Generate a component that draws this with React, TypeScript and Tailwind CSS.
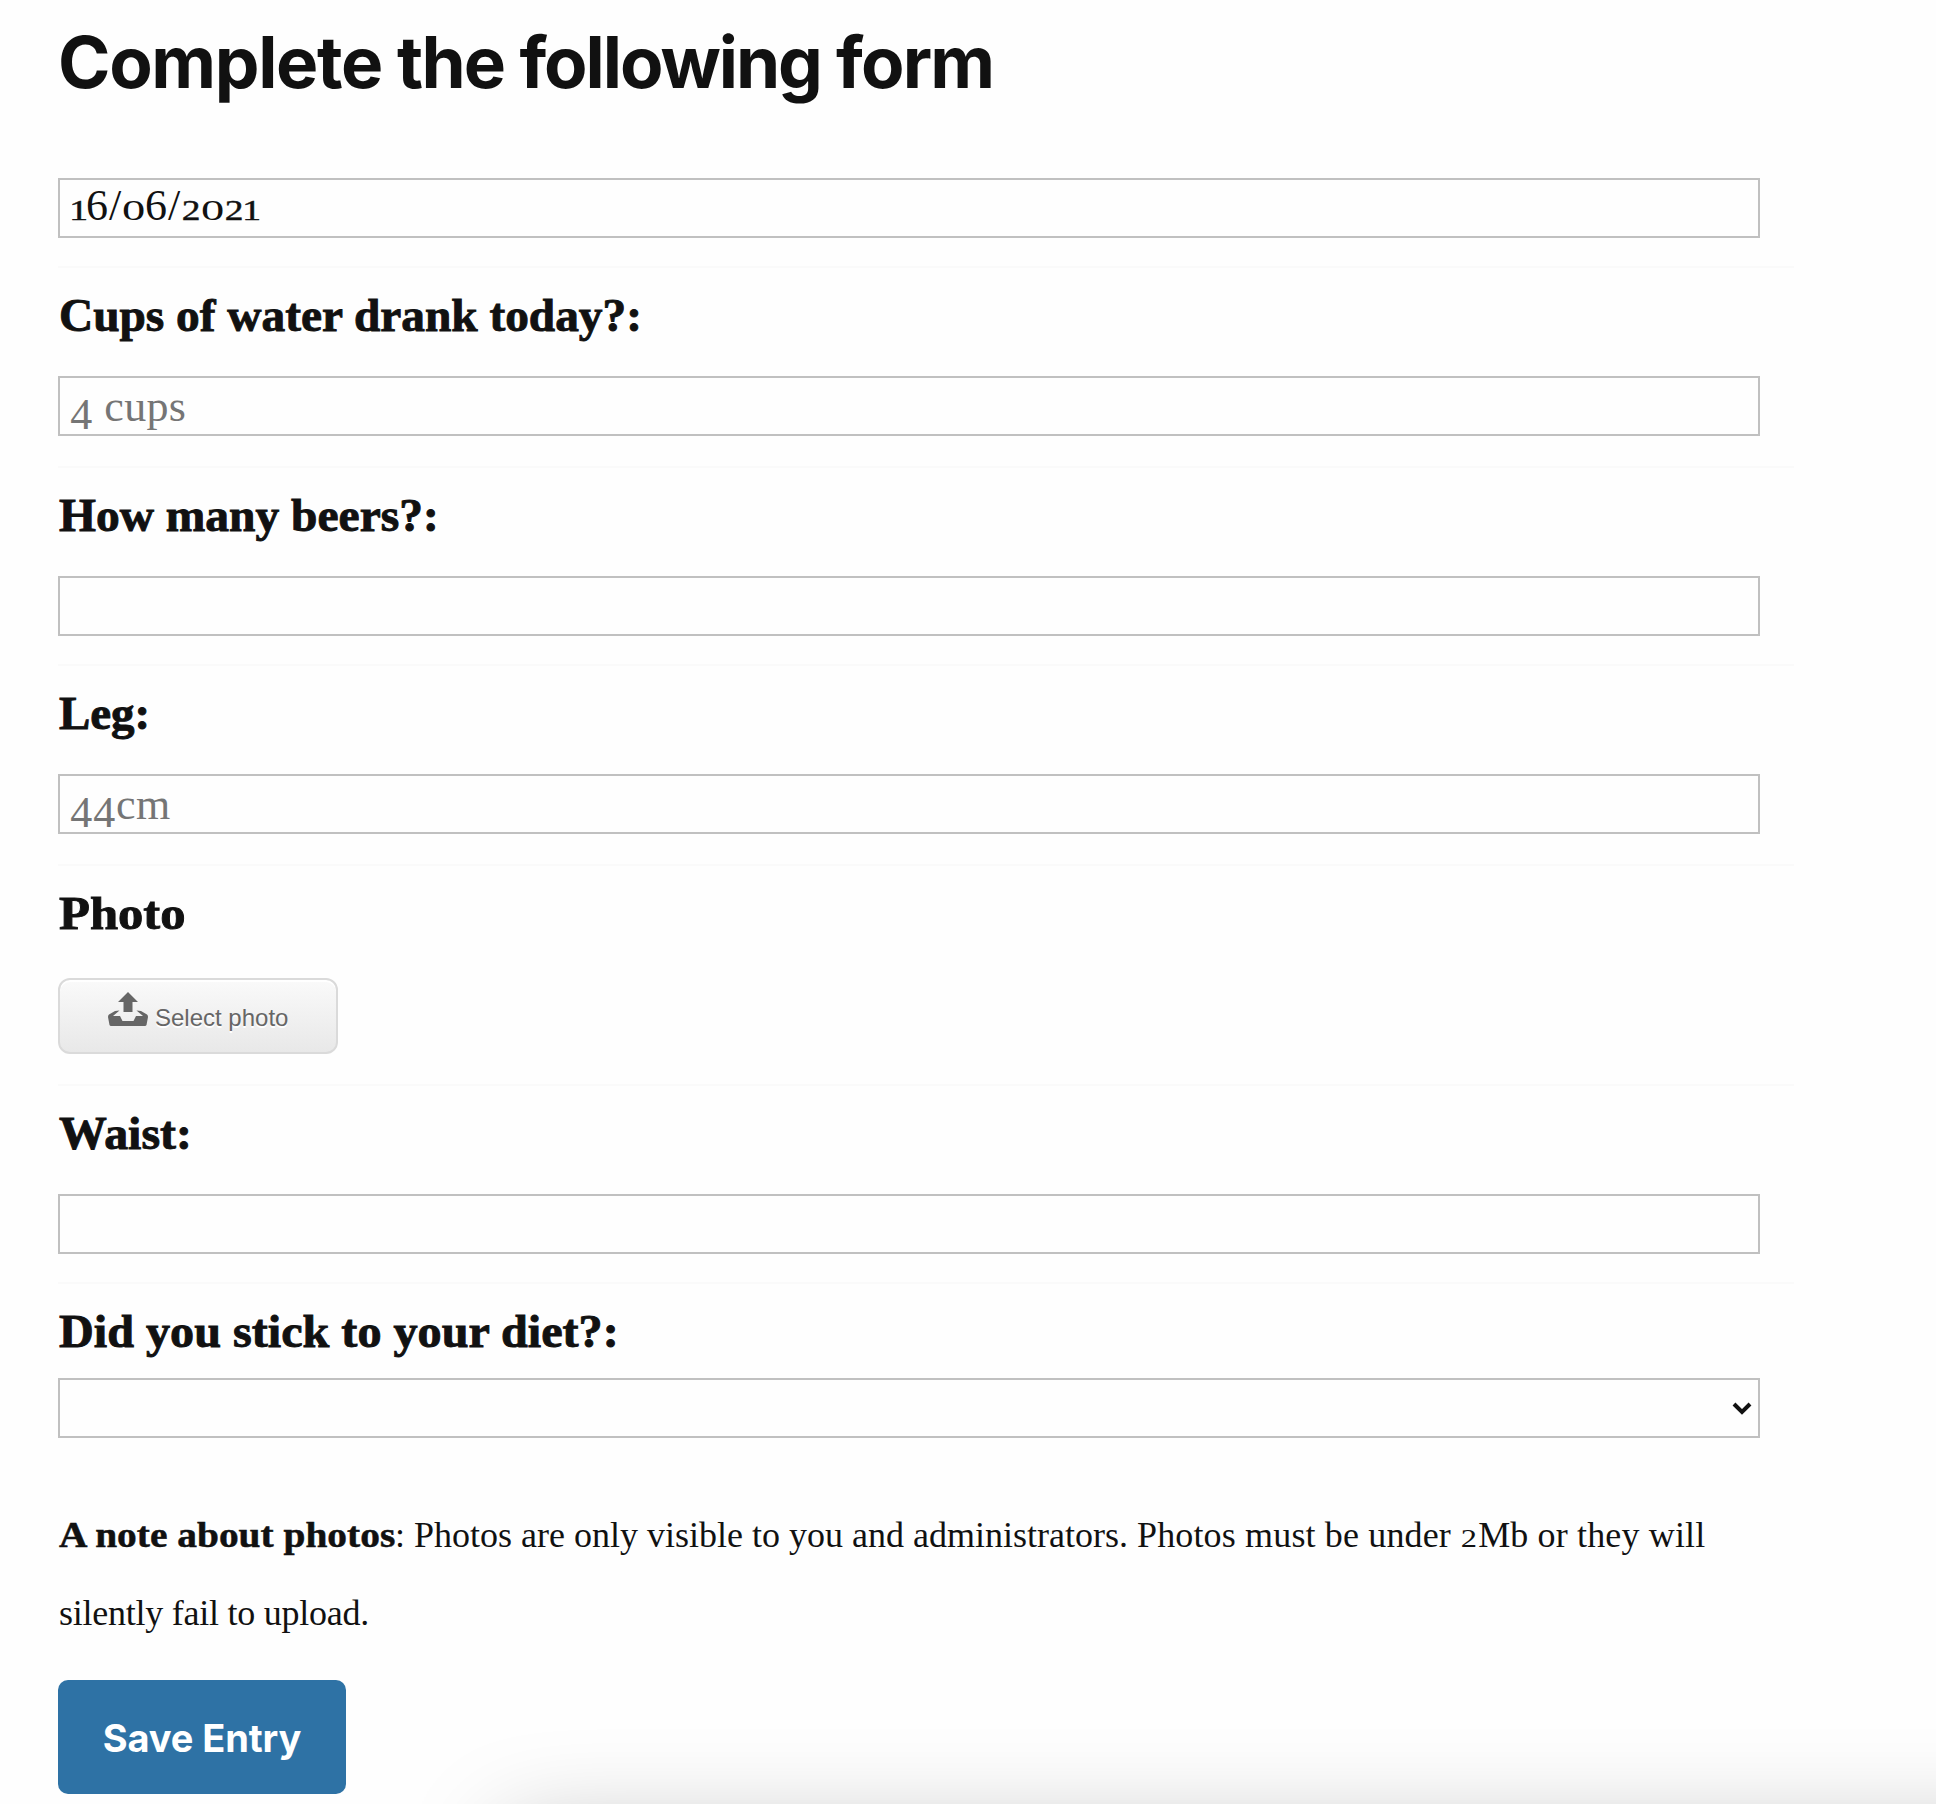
import type { ReactNode } from "react";

const glyphs: Record<string, string> = {
  "1": "w-[15px] text-[30px] scale-x-[1.25] [-webkit-text-stroke:0.5px_currentColor]",
  "2": "w-[20px] text-[30px] scale-x-[1.25] [-webkit-text-stroke:0.4px_currentColor]",
  "0": "w-[23px] text-[30px] scale-x-[1.55]",
  "4": "w-[23px] text-[44px] translate-y-[8px]",
  "6": "w-[22px] text-[44px]",
  "/": "w-[14px] text-[44px]",
};

/* Text with old-style figures. */
function Figures({ children, className = "" }: { children: string; className?: string }) {
  return (
    <span className={`whitespace-pre ${className}`}>
      {children.split("").map((c, i) =>
        glyphs[c] ? (
          <span key={i} className={`inline-block text-center ${glyphs[c]}`}>{c}</span>
        ) : (
          <span key={i}>{c}</span>
        ),
      )}
    </span>
  );
}

function Field({ children, className = "" }: { children?: ReactNode; className?: string }) {
  return (
    <div className={`flex h-[60px] w-[1702px] border-2 border-[#c0c0c0] bg-[#fefefe] pl-[10px] text-[44px] leading-[56px] ${className}`}>
      {children}
    </div>
  );
}

function Label({ children, height = "h-[108px]", className }: { children: string; height?: string; className: string }) {
  return (
    <div className={`pt-[20px] pl-px text-[46px] leading-[56px] font-bold ${height}`}>
      <span className={`inline-block origin-left whitespace-nowrap [-webkit-text-stroke:0.9px_currentColor] ${className}`}>
        {children}
      </span>
    </div>
  );
}

function Row({ children, className }: { children: ReactNode; className: string }) {
  return <div className={`w-[1736px] border-b-2 border-[#fafafa] ${className}`}>{children}</div>;
}

export default function App() {
  return (
    <main className="relative h-[1804px] w-[1936px] overflow-hidden bg-[#fefefe] pl-[58px] font-['Liberation_Serif',serif] text-[#111]">
      <h1 className="h-[178px] pt-[19px] font-['Inter',sans-serif] text-[71px] leading-[86px] font-bold tracking-[-1.78px] whitespace-nowrap">
        <span className="tracking-[-1.35px]">Complete</span> the{" "}
        <span className="tracking-[-2.05px]">following</span> form
      </h1>
      <Row className="h-[90px]">
        <Field><Figures className="-mt-[2px] ml-px">16/06/2021</Figures></Field>
      </Row>
      <Row className="h-[200px]">
        <Label className="scale-x-[1.029]">Cups of water drank today?:</Label>
        <Field className="text-[#757575]"><Figures className="mt-px tracking-[0.3px]">4 cups</Figures></Field>
      </Row>
      <Row className="h-[198px]">
        <Label className="scale-x-[1.032]">How many beers?:</Label>
        <Field />
      </Row>
      <Row className="h-[200px]">
        <Label className="scale-x-[1.02]">Leg:</Label>
        <Field className="text-[#757575]"><Figures className="mt-px tracking-[0.5px]">44cm</Figures></Field>
      </Row>
      <Row className="h-[220px]">
        <Label height="h-[112px]" className="scale-x-[1.1]">Photo</Label>
        <div className="flex h-[76px] w-[280px] rounded-[12px] border-2 border-[#dadada] bg-linear-to-b from-[#fafafa] to-[#e8e8e8] pl-[48px] shadow-[inset_0_2px_0_#fff]">
          <svg className="mt-[12px] h-[34px] w-[40px] shrink-0" viewBox="0 0 40 34" fill="#666">
            <path d="M20 0 30 10H24.500V20H15.500V10H10Z" />
            <path d="M0 25Q0 23 1 22.500L7 19 11.500 18.500 5 24H12L14.500 29H25.500L28 24H35L28.500 18.500 33 19 39 22.500Q40 23 40 25L38.500 33Q38 34 37 34H3Q2 34 1.500 33Z" />
          </svg>
          <span className="mt-[24px] ml-[7px] font-['Liberation_Sans',sans-serif] text-[24px] leading-[28px] whitespace-nowrap text-[#666] [text-shadow:0_2px_0_#fff]">
            Select photo
          </span>
        </div>
      </Row>
      <Row className="h-[198px]">
        <Label className="scale-x-[1.04]">Waist:</Label>
        <Field />
      </Row>
      <Label height="h-[94px]" className="scale-x-[1.047]">Did you stick to your diet?:</Label>
      <Field className="items-center justify-end pr-[6px]">
        <svg className="h-[13px] w-[20px]" viewBox="0 0 20 13" fill="none" stroke="#111" strokeWidth="4">
          <path d="M2 2 10 10 18 2" />
        </svg>
      </Field>
      <p className="mt-[58px] h-[184px] w-[1736px] pl-px text-[36px] leading-[78px] whitespace-nowrap">
        <b className="mr-[29px] inline-block origin-left scale-x-[1.095] leading-none [-webkit-text-stroke:0.5px_currentColor]">A note about photos</b>
        : Photos are only visible to you and administrators.{" "}
        <span className="tracking-[0.15px]">
          Photos must be under{" "}
          <span className="inline-block w-[18px] scale-x-[1.3] text-center text-[25px] leading-none">2</span>Mb or they will
        </span>
        <br />
        <span className="tracking-[-0.25px]">silently fail to upload.</span>
      </p>
      <button className="block h-[114px] w-[288px] rounded-[10px] bg-[#2e72a5] pt-[2px] font-['Inter',sans-serif] text-[38px] font-bold tracking-[-0.1px] text-white">
        Save Entry
      </button>
      <div className="absolute top-[1834px] left-[506px] h-[300px] w-[1700px] shadow-[0_0_100px_rgba(0,0,0,0.27)]" />
    </main>
  );
}
